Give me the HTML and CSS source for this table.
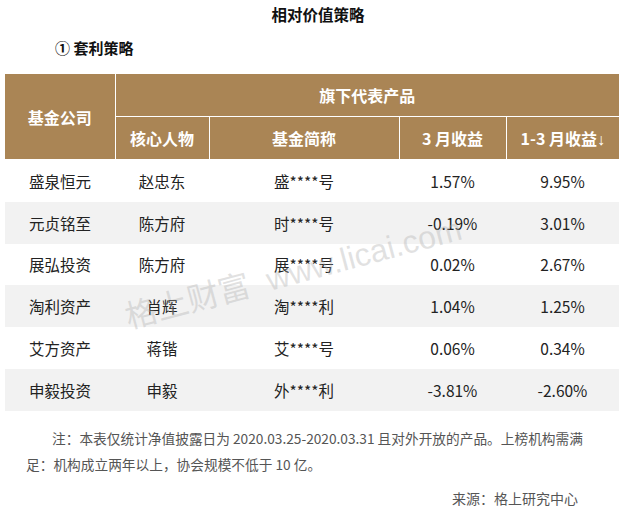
FILE: index.html
```html
<!DOCTYPE html>
<html lang="zh-CN">
<head>
<meta charset="utf-8">
<title>相对价值策略</title>
<link rel="stylesheet" href="styles.css">
</head>
<body>
<div class="page">
  <h1 class="title">相对价值策略</h1>
  <h2 class="subtitle">① 套利策略</h2>
  <table class="fund-table">
    <colgroup>
      <col class="c1"><col class="c2"><col class="c3"><col class="c4"><col class="c5">
    </colgroup>
    <thead>
      <tr>
        <th rowspan="2">基金公司</th>
        <th colspan="4">旗下代表产品</th>
      </tr>
      <tr>
        <th>核心人物</th>
        <th>基金简称</th>
        <th>3 月收益</th>
        <th>1-3 月收益<span class="arrow">↓</span></th>
      </tr>
    </thead>
    <tbody>
      <tr><td>盛泉恒元</td><td>赵忠东</td><td>盛****号</td><td>1.57%</td><td>9.95%</td></tr>
      <tr class="alt"><td>元贞铭至</td><td>陈方府</td><td>时****号</td><td>-0.19%</td><td>3.01%</td></tr>
      <tr><td>展弘投资</td><td>陈方府</td><td>展****号</td><td>0.02%</td><td>2.67%</td></tr>
      <tr class="alt"><td>淘利资产</td><td>肖辉</td><td>淘****利</td><td>1.04%</td><td>1.25%</td></tr>
      <tr><td>艾方资产</td><td>蒋锴</td><td>艾****号</td><td>0.06%</td><td>0.34%</td></tr>
      <tr class="alt"><td>申毅投资</td><td>申毅</td><td>外****利</td><td>-3.81%</td><td>-2.60%</td></tr>
    </tbody>
  </table>
  <p class="note">注：本表仅统计净值披露日为 2020.03.25-2020.03.31 且对外开放的产品。上榜机构需满<br>足：机构成立两年以上，协会规模不低于 10 亿。</p>
  <p class="source">来源：格上研究中心</p>
  <div class="watermark">格上财富&nbsp;&nbsp;www.licai.com</div>
</div>
</body>
</html>
```
FILE: styles.css
```css
html, body {
  margin: 0;
  padding: 0;
  background: #fff;
}
.page {
  position: relative;
  width: 624px;
  height: 510px;
  overflow: hidden;
  font-family: "Noto Sans CJK SC", "Noto Sans", sans-serif;
  color: #222;
}
.title {
  margin: 0;
  font-size: 15.5px;
  font-weight: bold;
  line-height: 28px;
  text-align: center;
  padding-left: 12px;
  color: #111;
}
.subtitle {
  margin: 10px 0 0;
  padding-left: 55px;
  font-size: 15px;
  font-weight: bold;
  line-height: 20px;
  color: #111;
}
.fund-table {
  margin: 16px 5px 0;
  width: 614px;
  border-collapse: collapse;
  table-layout: fixed;
  font-size: 15.5px;
}
.c1 { width: 110px; }
.c2 { width: 94px; }
.c3 { width: 190px; }
.c4 { width: 107px; }
.c5 { width: 113px; }
.fund-table th {
  background: #aa8555;
  color: #fff;
  font-weight: bold;
  font-size: 16px;
  height: 42px;
  padding: 0;
  border: 1px solid #fff;
  text-align: center;
}
.fund-table thead tr:first-child th { border-top: none; }
.fund-table th:first-child { border-left: none; }
.fund-table th:last-child { border-right: none; }
.arrow {
  font-family: "Liberation Sans", sans-serif;
  font-weight: normal;
}
.fund-table td {
  height: 41.8px;
  padding: 0;
  text-align: center;
  color: #222;
}
.fund-table tr.alt td {
  background: #f2f2f2;
}
.note {
  margin: 14px 0 0;
  padding: 0 26px;
  font-size: 13.7px;
  line-height: 26px;
  text-indent: 26px;
  color: #555;
}
.source {
  margin: 8px 0 0;
  padding-right: 46px;
  font-size: 14px;
  line-height: 26px;
  text-align: right;
  color: #555;
}
.watermark {
  position: absolute;
  left: 126px;
  top: 300px;
  font-family: "Liberation Sans", "Noto Sans CJK SC", sans-serif;
  font-size: 32px;
  line-height: 36px;
  color: rgba(170, 170, 170, 0.35);
  transform: rotate(-15deg);
  transform-origin: left center;
  white-space: nowrap;
  pointer-events: none;
}
```
